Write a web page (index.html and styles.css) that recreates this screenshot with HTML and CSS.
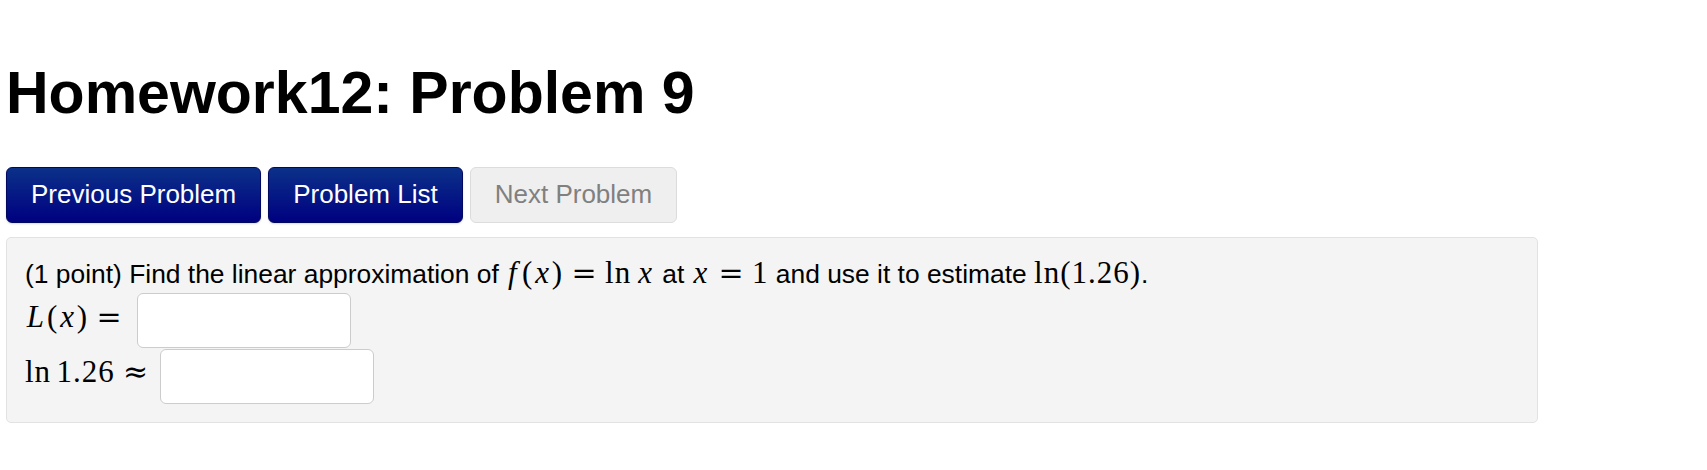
FILE: index.html
```html
<!DOCTYPE html>
<html lang="en">
<head>
<meta charset="utf-8">
<title>Homework12: Problem 9</title>
<link rel="stylesheet" href="styles.css">
</head>
<body>
<div class="page">
  <h1 class="title">Homework12: Problem 9</h1>
  <div class="nav">
    <a class="btn btn-primary">Previous Problem</a>
    <a class="btn btn-primary">Problem List</a>
    <a class="btn btn-disabled">Next Problem</a>
  </div>
  <div class="panel">
    <p class="q">(1 point) Find the linear approximation of <span class="m"><i class="f">f</i>(<i>x</i>)<span class="op">=</span>ln<span class="th"></span><i>x</i></span> at <span class="m"><i>x</i><span class="op">=</span>1</span> and use it to estimate <span class="m">ln(1.26)</span>.</p>
    <div class="row row-a">
      <span class="m lbl"><i>L</i>(<i>x</i>)<span class="op op-end">=</span></span>
      <input class="ans" type="text">
    </div>
    <div class="row row-b">
      <span class="m lbl">ln<span class="th"></span>1.26<span class="op op-end">≈</span></span>
      <input class="ans" type="text">
    </div>
  </div>
</div>
</body>
</html>
```

FILE: styles.css
```css
html, body {
  margin: 0;
  padding: 0;
  background: #ffffff;
}

body {
  font-family: "Liberation Sans", Arial, sans-serif;
  color: #000000;
}

.page {
  padding: 0 6px;
}

.title {
  font-size: 59px;
  line-height: 66px;
  font-weight: bold;
  margin: 60px 0 0 0;
}

.nav {
  display: flex;
  gap: 7px;
  margin-top: 41px;
}

.btn {
  display: block;
  font-size: 26px;
  line-height: 32px;
  padding: 10px 24px 12px 24px;
  border: 1px solid transparent;
  border-radius: 6px;
  text-decoration: none;
  white-space: nowrap;
}

.btn-primary {
  color: #ffffff;
  background: linear-gradient(to bottom, #0b3189 0%, #000080 100%);
  border-color: #00085f;
  box-shadow: 0 1px 2px rgba(0, 0, 0, 0.15);
}

.btn-disabled {
  color: #808080;
  background: #efefef;
  border-color: #dcdcdc;
}

.panel {
  box-sizing: border-box;
  width: 1532px;
  margin-top: 14px;
  background: #f4f4f4;
  border: 1px solid #e2e2e2;
  border-radius: 5px;
  padding: 19px 18px 18px 18px;
}

.q {
  margin: 0;
  font-size: 26.4px;
  line-height: 34px;
}

.m {
  font-family: "Liberation Serif", "Times New Roman", serif;
  font-size: 31px;
  line-height: 30px;
  letter-spacing: 1px;
}

.m i {
  font-style: italic;
  padding: 0 0.06em;
}

.m i.f {
  padding-right: 0.14em;
}

.op {
  font-family: "DejaVu Serif", "Liberation Serif", serif;
  font-size: 30px;
  margin: 0 0.28em;
  letter-spacing: 0;
}

.op-end {
  margin-right: 0;
}

.th {
  display: inline-block;
  width: 0.17em;
}

.row {
  display: flex;
  align-items: flex-start;
}

.row-a {
  margin-top: 2px;
}

.row-b {
  margin-top: 1px;
}

.lbl {
  padding-top: 9px;
  white-space: nowrap;
}

.row-b .lbl {
  padding-top: 8px;
}

.ans {
  box-sizing: border-box;
  width: 214px;
  height: 55px;
  margin: 0 0 0 15px;
  border: 1px solid #cccccc;
  border-radius: 6px;
  background: #ffffff;
  font-size: 26px;
  padding: 4px 8px;
}

.row-b .ans {
  margin-left: 12px;
}
```
